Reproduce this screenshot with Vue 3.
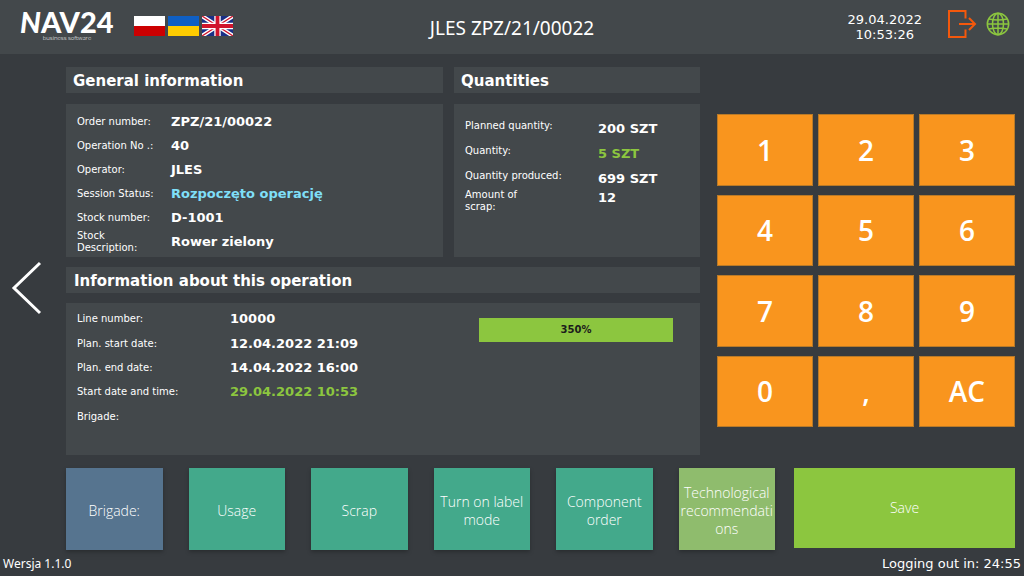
<script setup>
const general = [
  { label: 'Order number:', value: 'ZPZ/21/00022', tone: '' },
  { label: 'Operation No .:', value: '40', tone: '' },
  { label: 'Operator:', value: 'JLES', tone: '' },
  { label: 'Session Status:', value: 'Rozpoczęto operację', tone: 'cyan' },
  { label: 'Stock number:', value: 'D-1001', tone: '' },
  { label: 'Stock Description:', value: 'Rower zielony', tone: '' }
]
const quantities = [
  { label: 'Planned quantity:', value: '200 SZT', tone: '' },
  { label: 'Quantity:', value: '5 SZT', tone: 'green' },
  { label: 'Quantity produced:', value: '699 SZT', tone: '' },
  { label: 'Amount of scrap:', value: '12', tone: '' }
]
const operation = [
  { label: 'Line number:', value: '10000', tone: '' },
  { label: 'Plan. start date:', value: '12.04.2022 21:09', tone: '' },
  { label: 'Plan. end date:', value: '14.04.2022 16:00', tone: '' },
  { label: 'Start date and time:', value: '29.04.2022 10:53', tone: 'green' },
  { label: 'Brigade:', value: '', tone: '' }
]
const keys = ['1', '2', '3', '4', '5', '6', '7', '8', '9', '0', ',', 'AC']
const actions = [
  { text: 'Brigade:', tone: 'blue' },
  { text: 'Usage', tone: 'teal' },
  { text: 'Scrap', tone: 'teal' },
  { text: 'Turn on label mode', tone: 'teal' },
  { text: 'Component order', tone: 'teal' },
  { text: 'Technological recommendations', tone: 'olive' }
]
</script>

<template>
  <div class="page">
    <header class="header">
      <div class="brand">
        <div class="logo">
          <div class="logo-name"><i>N</i>AV24</div>
          <div class="logo-sub">business software</div>
        </div>
        <div class="flags">
          <button class="flag" type="button" aria-label="Polski">
            <svg viewBox="0 0 31 20"><rect width="31" height="10" fill="#fff" /><rect y="10" width="31" height="10" fill="#cc0001" /></svg>
          </button>
          <button class="flag" type="button" aria-label="Українська">
            <svg viewBox="0 0 31 20"><rect width="31" height="10" fill="#0f5fc4" /><rect y="10" width="31" height="10" fill="#fc0" /></svg>
          </button>
          <button class="flag" type="button" aria-label="English">
            <svg viewBox="0 0 31 20">
              <rect width="31" height="20" fill="#1a2f86" />
              <path d="M0 0L31 20M31 0L0 20" stroke="#fff" stroke-width="4" />
              <path d="M0 0L31 20M31 0L0 20" stroke="#d0142c" stroke-width="1.3" />
              <path d="M15.500 0V20M0 10H31" stroke="#fff" stroke-width="6.400" />
              <path d="M15.500 0V20M0 10H31" stroke="#d0142c" stroke-width="3.800" />
            </svg>
          </button>
        </div>
      </div>
      <h1 class="title">JLES ZPZ/21/00022</h1>
      <div class="tools">
        <time class="clock" datetime="2022-04-29T10:53:26">29.04.2022<br>10:53:26</time>
        <button class="icon exit" type="button" aria-label="Log out">
          <svg viewBox="0 0 30 30" width="30" height="30" fill="none" stroke="#f4580c" stroke-width="2">
            <path d="M18.500 9.500V2H2V28H18.500V20.500" />
            <path d="M12 15H28M22 9L28 15L22 21" />
          </svg>
        </button>
        <button class="icon" type="button" aria-label="Language">
          <svg viewBox="0 0 24 24" width="24" height="24" fill="none" stroke="#8cc63f" stroke-width="1.500">
            <circle cx="12" cy="12" r="10.700" />
            <ellipse cx="12" cy="12" rx="5.500" ry="10.700" />
            <path d="M12 1V23M1 12H23M3 7Q12 9 21 7M3 17Q12 15 21 17" />
          </svg>
        </button>
      </div>
    </header>

    <main class="main">
      <button class="back" type="button" aria-label="Back">
        <svg viewBox="0 0 32 54" width="32" height="54" fill="none" stroke="#fff" stroke-width="3"><path d="M29 2L3 27L29 52" /></svg>
      </button>

      <div class="info">
        <section class="card">
          <h2>General information</h2>
          <dl class="panel general">
            <div v-for="row in general" :key="row.label" class="row">
              <dt>{{ row.label }}</dt>
              <dd :class="row.tone">{{ row.value }}</dd>
            </div>
          </dl>
        </section>
        <section class="card">
          <h2>Quantities</h2>
          <dl class="panel quantities">
            <div v-for="row in quantities" :key="row.label" class="row">
              <dt>{{ row.label }}</dt>
              <dd :class="row.tone">{{ row.value }}</dd>
            </div>
          </dl>
        </section>
        <section class="card wide">
          <h2>Information about this operation</h2>
          <div class="panel operation">
            <dl class="dates">
              <div v-for="row in operation" :key="row.label" class="row">
                <dt>{{ row.label }}</dt>
                <dd :class="row.tone">{{ row.value }}</dd>
              </div>
            </dl>
            <div class="progress" role="progressbar" aria-label="Progress" aria-valuenow="350">350%</div>
          </div>
        </section>
      </div>

      <div class="keypad">
        <button v-for="key in keys" :key="key" type="button">{{ key }}</button>
      </div>
    </main>

    <div class="actions">
      <div class="tiles">
        <button v-for="a in actions" :key="a.text" type="button" :class="a.tone">{{ a.text }}</button>
      </div>
      <button class="save" type="button">Save</button>
    </div>

    <footer class="footer">
      <span class="version">Wersja 1.1.0</span>
      <span>Logging out in: 24:55</span>
    </footer>
  </div>
</template>

<style>
body {
  margin: 0;
  background: #373b3f;
}
</style>

<style scoped>
* {
  box-sizing: border-box;
}
.page {
  min-height: 100vh;
  display: flex;
  flex-direction: column;
  background: #373b3f;
  color: #fff;
  font-family: "DejaVu Sans", sans-serif;
}
button {
  border: 0;
  padding: 0;
  background: none;
  color: inherit;
  cursor: pointer;
}
svg {
  display: block;
}
.header {
  display: grid;
  grid-template-columns: 1fr auto 1fr;
  height: 54px;
  padding: 0 14px 0 20px;
  background: #43484b;
}
.brand {
  display: flex;
  gap: 20px;
}
.logo {
  width: 94px;
  padding-top: 8px;
}
.logo-name {
  font: 900 29px/27px Lato, sans-serif;
  white-space: nowrap;
}
.logo-sub {
  font: 300 6px/7px "Open Sans", sans-serif;
  text-align: center;
}
.flags {
  display: flex;
  gap: 3px;
  padding-top: 16px;
}
.flag {
  width: 31px;
  height: 20px;
}
.title {
  margin: 0;
  padding-right: 6px;
  font: 400 19px/56px "Noto Sans", sans-serif;
}
.tools {
  display: flex;
  justify-content: flex-end;
  align-items: flex-start;
  padding-top: 9px;
}
.clock {
  margin: 3px 25px 0 0;
  font-size: 13px;
  line-height: 15px;
  text-align: center;
}
.exit {
  margin-right: 9px;
}
.tools .icon {
  min-height: 30px;
}
.main {
  display: grid;
  grid-template-columns: 49px minmax(0, 634fr) minmax(0, 298fr);
  gap: 17px;
  padding: 13px 9px 0 0;
}
.back {
  display: flex;
  align-items: center;
  padding: 54px 0 0 11px;
}
.info {
  display: grid;
  grid-template-columns: minmax(0, 377fr) minmax(0, 246fr);
  gap: 10px 11px;
}
.wide {
  grid-column: 1 / -1;
}
h2 {
  height: 26px;
  margin: 0 0 11px;
  padding: 0 7px;
  background: #43484b;
  font-size: 15px;
  line-height: 28px;
}
.wide h2 {
  margin-bottom: 10px;
  padding-left: 8px;
}
.panel {
  margin: 0;
  min-height: 153px;
  background: #43484b;
  padding-left: 11px;
}
.row {
  display: grid;
  align-items: center;
}
dt {
  font-size: 10px;
  line-height: 12px;
}
dd {
  margin: 0;
  font-size: 13px;
  font-weight: 700;
  line-height: 16px;
}
.cyan {
  color: #7fdff8;
}
.green {
  color: #8cc63f;
}
.general {
  padding-top: 6px;
}
.general .row {
  grid-template-columns: 94px 1fr;
  height: 24px;
}
.general .row:last-child dt {
  padding-right: 20px;
}
.quantities {
  padding-top: 12px;
}
.quantities .row {
  grid-template-columns: 133px 1fr;
  align-items: start;
  height: 25px;
}
.quantities .row:nth-child(3) {
  height: 19px;
}
.quantities dt {
  padding-top: 4px;
}
.quantities dd {
  padding-top: 5px;
}
.quantities .row:last-child dt {
  padding-right: 60px;
}
.operation {
  display: grid;
  grid-template-columns: minmax(0, 402fr) minmax(0, 194fr);
  align-items: start;
  min-height: 152px;
  padding-right: 27px;
}
.dates {
  display: grid;
  grid-auto-rows: 1fr;
  height: 122px;
  margin: 4px 0 0;
}
.dates .row {
  grid-template-columns: 153px 1fr;
}
.progress {
  margin-top: 15px;
  background: #8cc63f;
  color: #1c1c1c;
  font-size: 10px;
  font-weight: 700;
  line-height: 24px;
  text-align: center;
}
.keypad {
  display: grid;
  grid-template-columns: repeat(3, 1fr);
  grid-auto-rows: 1fr;
  gap: 9px 5px;
  height: 360px;
  padding-top: 47px;
}
.keypad button {
  border: 1px solid #b97a28;
  background: #f9951e;
  font: 600 28px/36px "Open Sans", sans-serif;
}
.actions {
  display: grid;
  grid-template-columns: minmax(0, 709fr) minmax(0, 221fr);
  align-items: start;
  gap: 19px;
  margin-top: 13px;
  padding: 0 9px 0 66px;
}
.tiles {
  display: grid;
  grid-template-columns: repeat(6, 1fr);
  column-gap: 26px;
}
.actions button {
  min-width: 0;
  height: 82px;
  font: 300 14px/18px "Open Sans", sans-serif;
  overflow-wrap: anywhere;
}
.tiles button {
  padding: 4px 1px 0;
  box-shadow: 0 2px 4px rgba(0, 0, 0, 0.25);
}
.blue {
  background: #56748f;
}
.teal {
  background: #43a98b;
}
.olive {
  background: #8fbc6d;
}
.actions .save {
  height: 80px;
  background: #8cc63f;
}
.footer {
  display: flex;
  justify-content: space-between;
  margin-top: auto;
  padding: 0 3px 4px;
  font-size: 13px;
  line-height: 16px;
}
.version {
  font-family: "Noto Sans", sans-serif;
  font-size: 12px;
}
</style>
